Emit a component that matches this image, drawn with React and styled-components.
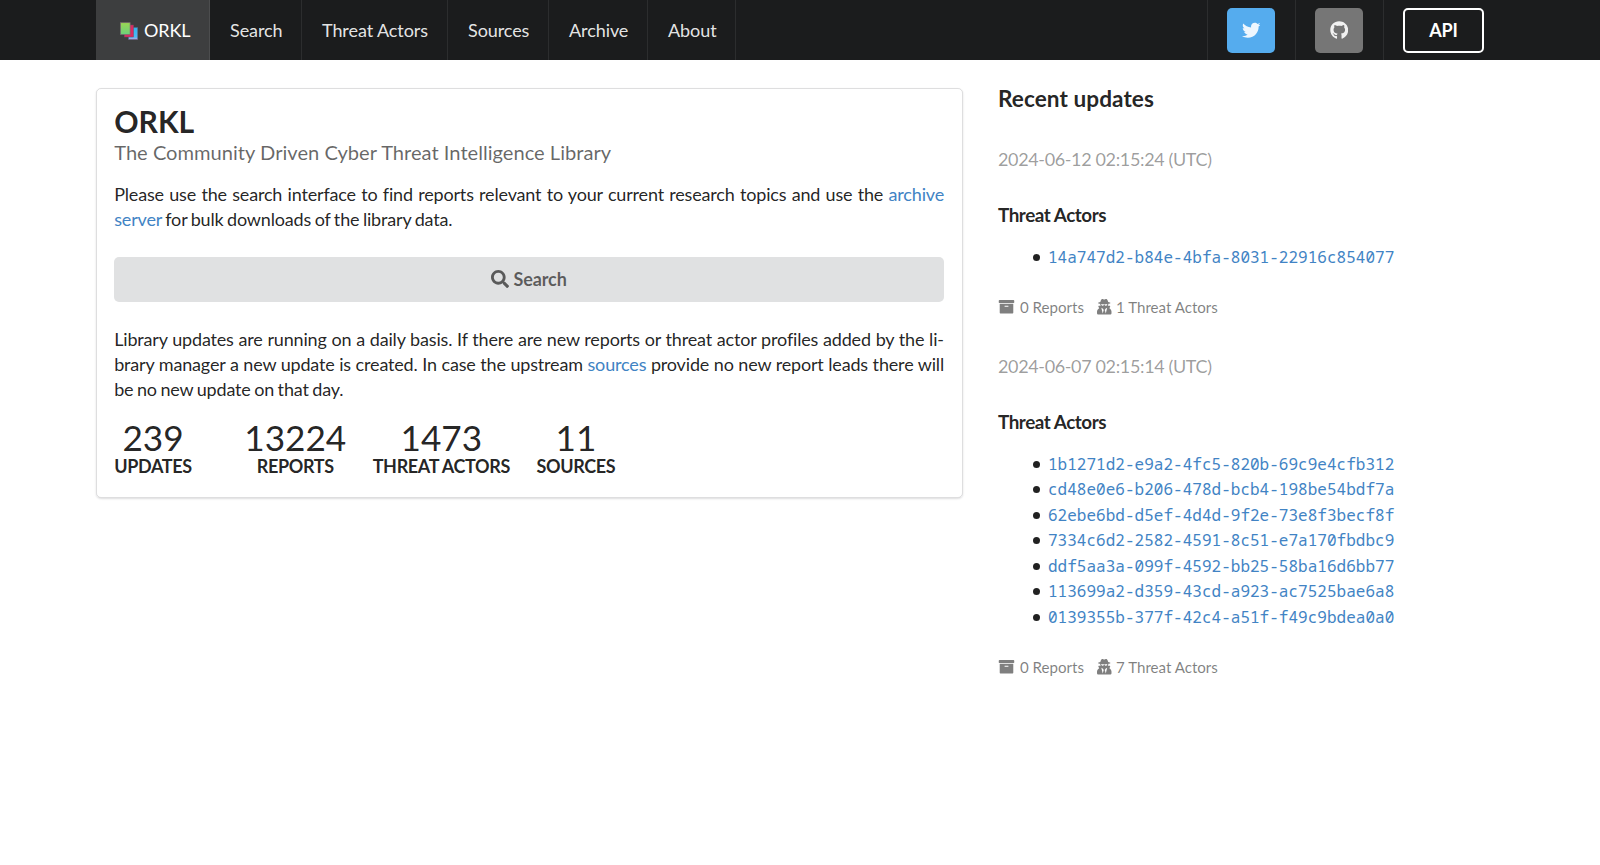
import React from "react";
import styled, { createGlobalStyle } from "styled-components";
import { FaSearch, FaTwitter, FaGithub, FaArchive, FaUserSecret } from "react-icons/fa";

const GlobalStyle = createGlobalStyle`
  *, *::before, *::after { box-sizing: border-box; }
  html { font-size: 17.6px; }
  body {
    margin: 0;
    background: #fff;
    color: rgba(0, 0, 0, 0.87);
    font-family: Lato, "Liberation Sans", sans-serif;
    font-size: 17.6px;
    line-height: 1.4285em;
  }
  a { color: #4183c4; text-decoration: none; }
`;

const Bar = styled.nav`
  background: #1b1c1d;
  height: 60px;
`;

const Container = styled.div`
  width: 80rem;
  margin: 0 auto;
`;

const Menu = styled(Container)`
  display: flex;
  height: 100%;
`;

const MenuItem = styled.a`
  && { color: ${(p) => (p.$active ? "#fff" : "rgba(255, 255, 255, 0.9)")}; }
  display: flex;
  align-items: center;
  width: ${(p) => p.$width}px;
  padding: 0 0 0 20px;
  font-size: 18px;
  line-height: 1;
  letter-spacing: -0.08px;
  white-space: nowrap;
  background: ${(p) => (p.$active ? "#3d3e3f" : "transparent")};
  border-right: 1px solid rgba(255, 255, 255, 0.08);
`;

const RightMenu = styled.div`
  display: flex;
  margin-left: auto;
`;

const RightItem = styled.div`
  display: flex;
  align-items: center;
  padding: 1px 20px 0 19px;
  border-left: 1px solid rgba(255, 255, 255, 0.08);
`;

const IconButton = styled.a`
  && { color: rgba(255, 255, 255, 0.9); }
  display: flex;
  align-items: center;
  justify-content: center;
  width: 48px;
  height: 45px;
  padding-bottom: 1px;
  border-radius: 5px;
  background: ${(p) => p.$bg};
  svg { width: 18.5px; height: 18.5px; }
`;

const ApiButton = styled.a`
  && { color: #fff; }
  display: flex;
  align-items: center;
  justify-content: center;
  width: 81px;
  height: 45px;
  padding-bottom: 1px;
  border: 2px solid #fff;
  border-radius: 5px;
  font-size: 18px;
  font-weight: 700;
  line-height: 1;
  letter-spacing: -0.2px;
`;

const Logo = styled.svg`
  width: 18px;
  height: 18px;
  margin: 2px 6px 0 4px;
`;

const Page = styled(Container)`
  display: flex;
  gap: 2rem;
  padding-top: 28px;
  align-items: flex-start;
`;

const Segment = styled.section`
  width: 866.8px;
  height: 410px;
  padding: 12.5px 17.8px 0 17.2px;
  border: 1px solid rgba(34, 36, 38, 0.15);
  border-radius: 5px;
  box-shadow: 0 1px 2px 0 rgba(34, 36, 38, 0.15);
`;

const Title = styled.h2`
  margin: 0 0 17.6px;
  font-size: 1.71428571rem;
  line-height: 1.28571429em;
`;

const Subtitle = styled.div`
  color: rgba(0, 0, 0, 0.6);
  font-size: 1.14285714rem;
  font-weight: 400;
  line-height: 1.2em;
`;

const Paragraph = styled.p`
  margin: 0;
  font-size: 18px;
  line-height: 25.14px;
  letter-spacing: -0.17px;
  word-spacing: -0.9px;
  text-align: justify;
`;

const SearchButton = styled.a`
  && { color: rgba(0, 0, 0, 0.6); }
  display: flex;
  align-items: center;
  justify-content: center;
  gap: 4px;
  height: 45px;
  margin: 25px 0 24.8px;
  padding-bottom: 2px;
  border-radius: 5px;
  background: #e0e1e2;
  font-size: 18px;
  font-weight: 700;
  line-height: 1;
  letter-spacing: -0.1px;
`;

const Statistics = styled.div`
  display: flex;
  gap: 1.5em;
  margin-top: 17px;
`;

const Statistic = styled.div`
  display: flex;
  flex-direction: column;
  align-items: center;
  text-transform: uppercase;
  &:first-child { margin-right: 1.48em; }
`;

const Value = styled.div`
  font-size: 2rem;
  line-height: 1em;
`;

const Label = styled.div`
  font-size: 18px;
  font-weight: 700;
  line-height: 23px;
  letter-spacing: -0.35px;
  word-spacing: -0.3px;
`;

const Updates = styled.aside`
  flex: 1;
`;

const Heading = styled.h3`
  margin: 0;
  font-size: 1.28571429rem;
  line-height: 22px;
  letter-spacing: 0.05px;
`;

const Update = styled.article`
  padding-top: ${(p) => (p.$first ? "37px" : "35px")};
`;

const Stamp = styled.div`
  color: rgba(0, 0, 0, 0.4);
  font-size: 18px;
  line-height: 25px;
  letter-spacing: -0.36px;
`;

const GroupTitle = styled.h4`
  margin: 31px 0 17px;
  font-size: 1.07142857rem;
  line-height: 24px;
  letter-spacing: -0.45px;
`;

const IdList = styled.ul`
  margin: 0 0 25.8px;
  padding-left: 35px;
  list-style: none;
`;

const IdItem = styled.li`
  display: flex;
  align-items: center;
  height: 25.45px;
  &::before {
    content: "";
    width: 7px;
    height: 7px;
    margin: 1px 8px 0 0;
    border-radius: 50%;
    background: rgba(0, 0, 0, 0.87);
  }
`;

const Code = styled.code`
  font-family: "Noto Sans Mono", monospace;
  font-size: 16px;
  line-height: 25px;
  letter-spacing: 0.02px;
`;

const Meta = styled.div`
  display: flex;
  align-items: center;
  gap: 13px;
  color: rgba(0, 0, 0, 0.5);
  font-size: 15.1px;
  line-height: 24px;
`;

const MetaItem = styled.span`
  display: flex;
  align-items: center;
  gap: ${(p) => p.$gap}px;
  svg { width: ${(p) => p.$icon}px; height: 15.5px; }
`;

const NAV = [
  ["Search", 92],
  ["Threat Actors", 146],
  ["Sources", 101],
  ["Archive", 99],
  ["About", 88],
];

const STATS = [
  ["239", "Updates"],
  ["13224", "Reports"],
  ["1473", "Threat Actors"],
  ["11", "Sources"],
];

const UPDATES = [
  { date: "2024-06-12 02:15:24 (UTC)", ids: ["14a747d2-b84e-4bfa-8031-22916c854077"] },
  {
    date: "2024-06-07 02:15:14 (UTC)",
    ids: [
      "1b1271d2-e9a2-4fc5-820b-69c9e4cfb312",
      "cd48e0e6-b206-478d-bcb4-198be54bdf7a",
      "62ebe6bd-d5ef-4d4d-9f2e-73e8f3becf8f",
      "7334c6d2-2582-4591-8c51-e7a170fbdbc9",
      "ddf5aa3a-099f-4592-bb25-58ba16d6bb77",
      "113699a2-d359-43cd-a923-ac7525bae6a8",
      "0139355b-377f-42c4-a51f-f49c9bdea0a0",
    ],
  },
];

function LogoMark() {
  return (
    <Logo viewBox="0 0 18 18">
      <defs>
        <linearGradient id="green" x1="0" y1="0" x2="0" y2="1">
          <stop offset="0" stopColor="#9bd653" />
          <stop offset="1" stopColor="#6ccf7c" />
        </linearGradient>
        <linearGradient id="blue" x1="0" y1="0" x2="0" y2="1">
          <stop offset="0" stopColor="#2fb4ee" />
          <stop offset="0.8" stopColor="#4fb8f4" />
          <stop offset="1" stopColor="#c9a4e0" />
        </linearGradient>
      </defs>
      <rect x="8.5" y="5.5" width="9.2" height="12" fill="url(#blue)" stroke="#5a5f86" strokeWidth="0.5" />
      <rect x="4.3" y="3" width="9.2" height="12" fill="#d92a62" stroke="#7a4a62" strokeWidth="0.5" />
      <rect x="0.5" y="0.7" width="9.6" height="11.8" fill="url(#green)" stroke="#7a6a72" strokeWidth="0.7" />
    </Logo>
  );
}

export default function App() {
  return (
    <>
      <GlobalStyle />
      <Bar>
        <Menu>
          <MenuItem $active $width={114} href="#">
            <LogoMark />
            ORKL
          </MenuItem>
          {NAV.map(([name, width]) => (
            <MenuItem key={name} $width={width} href="#">{name}</MenuItem>
          ))}
          <RightMenu>
            <RightItem><IconButton $bg="#55acee" href="#"><FaTwitter /></IconButton></RightItem>
            <RightItem><IconButton $bg="#767676" href="#"><FaGithub /></IconButton></RightItem>
            <RightItem><ApiButton href="#">API</ApiButton></RightItem>
          </RightMenu>
        </Menu>
      </Bar>
      <Page>
        <Segment>
          <Title>
            ORKL
            <Subtitle>The Community Driven Cyber Threat Intelligence Library</Subtitle>
          </Title>
          <Paragraph>
            Please use the search interface to find reports relevant to your current research topics and use the{" "}
            <a href="#">archive server</a> for bulk downloads of the library data.
          </Paragraph>
          <SearchButton href="#"><FaSearch />Search</SearchButton>
          <Paragraph>
            Library updates are running on a daily basis. If there are new reports or threat actor profiles added by
            the li{"\u00AD"}brary manager a new update is created. In case the upstream <a href="#">sources</a> provide
            no new report leads there will be{"\u00A0"}no new update on that day.
          </Paragraph>
          <Statistics>
            {STATS.map(([value, label]) => (
              <Statistic key={label}>
                <Value>{value}</Value>
                <Label>{label}</Label>
              </Statistic>
            ))}
          </Statistics>
        </Segment>
        <Updates>
          <Heading>Recent updates</Heading>
          {UPDATES.map((u, i) => (
            <Update key={u.date} $first={i === 0}>
              <Stamp>{u.date}</Stamp>
              <GroupTitle>Threat Actors</GroupTitle>
              <IdList>
                {u.ids.map((id) => (
                  <IdItem key={id}><a href="#"><Code>{id}</Code></a></IdItem>
                ))}
              </IdList>
              <Meta>
                <MetaItem $icon={17} $gap={5}><FaArchive />0 Reports</MetaItem>
                <MetaItem $icon={14.5} $gap={4.5}>
                  <FaUserSecret preserveAspectRatio="none" />
                  {u.ids.length} Threat Actors
                </MetaItem>
              </Meta>
            </Update>
          ))}
        </Updates>
      </Page>
    </>
  );
}
